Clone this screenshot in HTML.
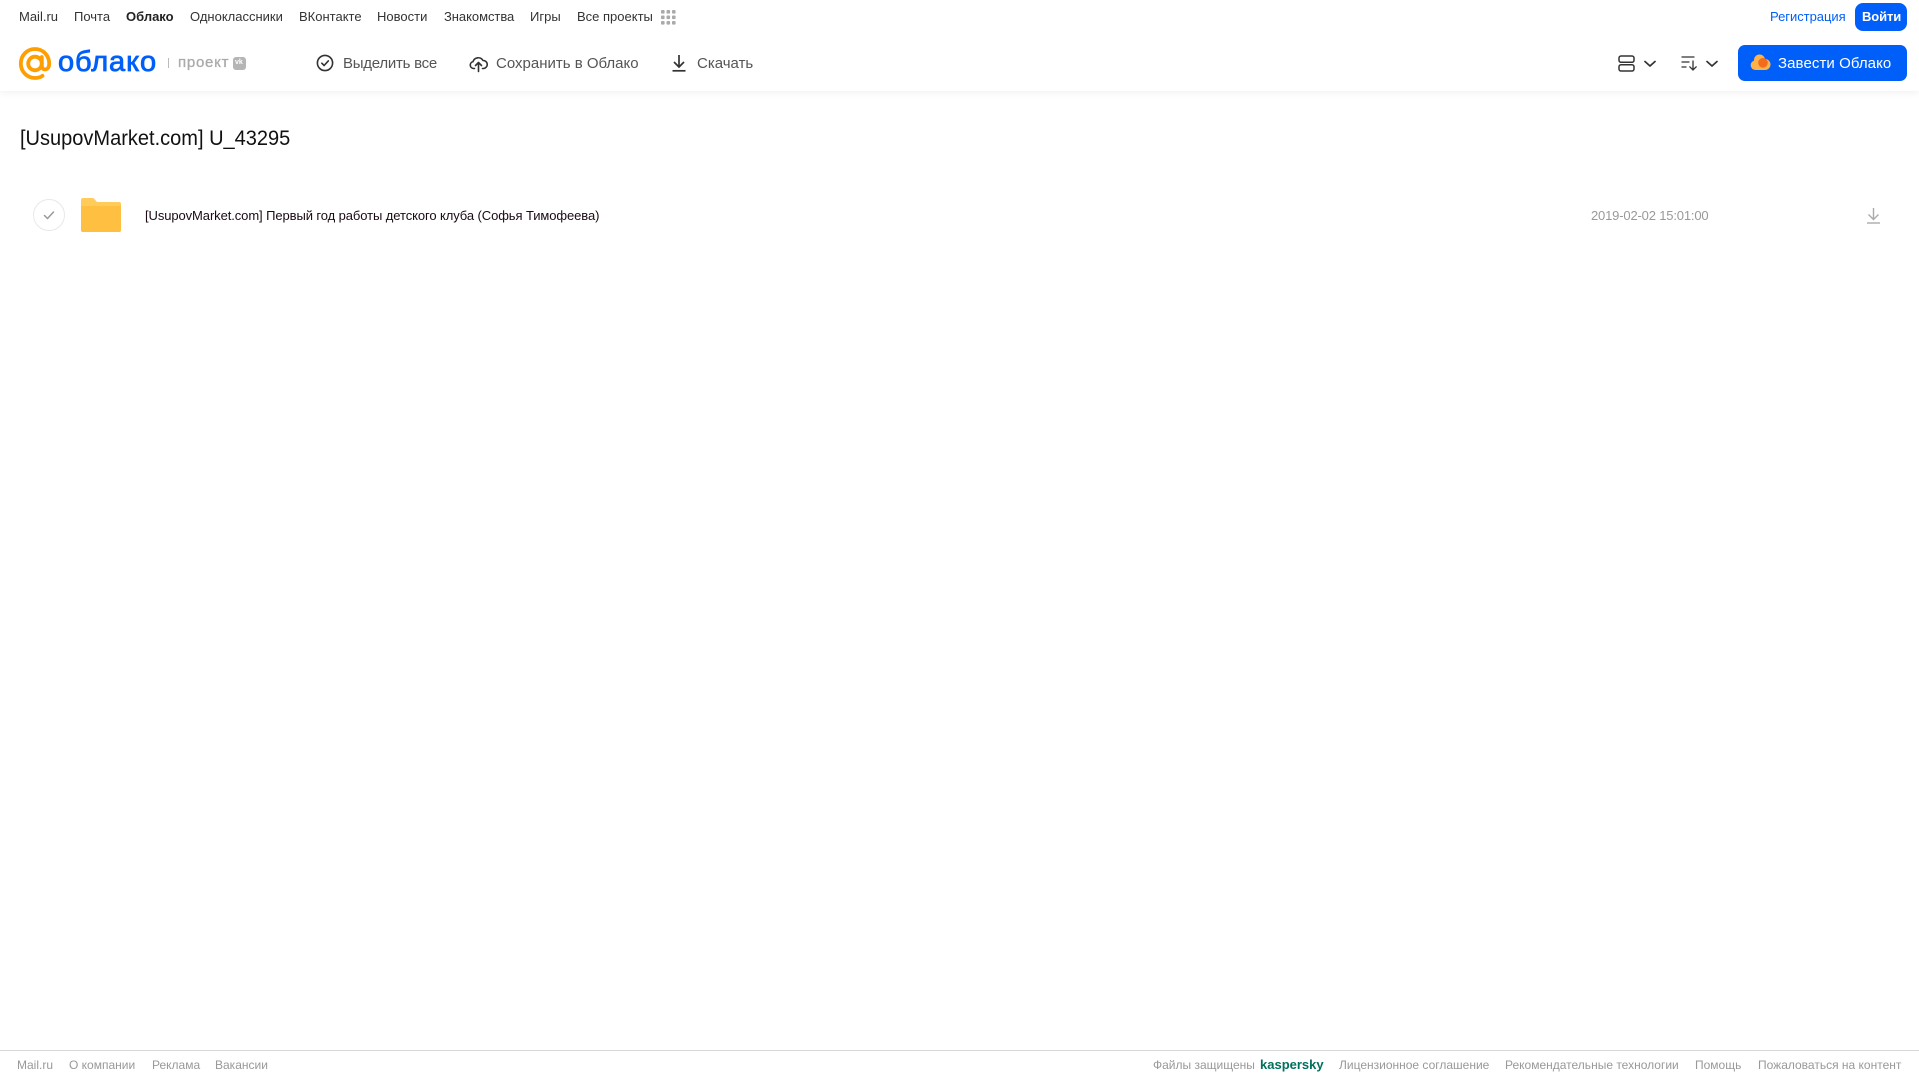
<!DOCTYPE html>
<html lang="ru"><head><meta charset="utf-8"><title>Облако</title>
<style>
html,body{margin:0;padding:0;background:#fff}
body{width:1919px;height:1079px;position:relative;overflow:hidden;font-family:"Liberation Sans",sans-serif}
.t{position:absolute;white-space:nowrap;line-height:20px}
.n{top:7px;font-size:13px;color:#333}
.a{top:54px;font-size:15px;color:#555}
.f{top:1055px;font-size:12px;color:#999}
svg{position:absolute;overflow:visible}
#hd{position:absolute;left:0;top:0;width:1919px;height:91px;background:#fff;box-shadow:0 1px 8px rgba(0,0,0,.07)}
</style></head><body>
<div id="hd"></div>
<span class="t n" style="left:19px">Mail.ru</span>
<span class="t n" style="left:74px">Почта</span>
<span class="t n" style="left:126px;font-weight:700;color:#222">Облако</span>
<span class="t n" style="left:190px">Одноклассники</span>
<span class="t n" style="left:299px">ВКонтакте</span>
<span class="t n" style="left:377px">Новости</span>
<span class="t n" style="left:444px;letter-spacing:-.05px">Знакомства</span>
<span class="t n" style="left:530px">Игры</span>
<span class="t n" style="left:577px">Все проекты</span>
<svg style="left:661px;top:10px" width="15" height="15" fill="#aaa"><rect x="0" y="0" width="3.6" height="3.6" rx="1"/><rect x="5.5" y="0" width="3.6" height="3.6" rx="1"/><rect x="11" y="0" width="3.6" height="3.6" rx="1"/><rect x="0" y="5.5" width="3.6" height="3.6" rx="1"/><rect x="5.5" y="5.5" width="3.6" height="3.6" rx="1"/><rect x="11" y="5.5" width="3.6" height="3.6" rx="1"/><rect x="0" y="11" width="3.6" height="3.6" rx="1"/><rect x="5.5" y="11" width="3.6" height="3.6" rx="1"/><rect x="11" y="11" width="3.6" height="3.6" rx="1"/></svg>
<span class="t n" style="left:1770px;color:#005ff9;letter-spacing:-.03px">Регистрация</span>
<div style="position:absolute;left:1855px;top:3px;width:52px;height:28px;border-radius:8px;background:#005ff9"></div>
<span class="t n" style="left:1862px;color:#fff;font-weight:700;letter-spacing:-.1px">Войти</span>

<svg style="left:19px;top:47px" width="33" height="33" viewBox="0 0 33 33" fill="none" stroke="#ff9e00" stroke-width="3.8"><circle cx="16" cy="16.5" r="6.8"/><path d="M22.800 10v8.500c0 5.600 7.400 5.600 7.400-2C30.200 8.500 24 2 16 2 8 2 1.800 8.500 1.800 16.500S8 31 16 31c3 0 5.500-.8 7.500-2.200" stroke-linecap="round"/></svg>
<span class="t" style="left:58px;top:45px;font-size:29px;line-height:34px;color:#005ff9;letter-spacing:.9px;-webkit-text-stroke:.8px #005ff9">облако</span>
<div style="position:absolute;left:168px;top:58px;width:1px;height:10px;background:#bbb"></div>
<span class="t" style="left:178px;top:53px;font-size:15px;color:#aaa;letter-spacing:.75px;-webkit-text-stroke:.3px #aaa">проект</span>
<div style="position:absolute;left:233px;top:57px;width:13px;height:13px;border-radius:3px;background:#b5b5b5"></div>
<span class="t" style="left:235px;top:53px;font-size:7px;color:#fff;font-weight:700">vk</span>

<svg style="left:316px;top:54px" width="18" height="18" fill="none" stroke="#333" stroke-width="1.6"><circle cx="9" cy="9" r="7.6"/><path d="M5.800 9.200l2.300 2.300 4.200-4.600" stroke-linecap="round" stroke-linejoin="round"/></svg>
<span class="t a" style="left:343px;letter-spacing:-.25px">Выделить все</span>
<svg style="left:469px;top:54px" width="19" height="18" fill="none" stroke="#333" stroke-width="1.6" stroke-linecap="round" stroke-linejoin="round"><path d="M5.500 14.500H4.500a3.500 3.500 0 0 1-.5-6.900A5.500 5.500 0 0 1 14 6.500a4 4 0 0 1 .5 8h-1"/><path d="M9.500 17.500V9M6.500 11.500l3-3 3 3"/></svg>
<span class="t a" style="left:496px">Сохранить в Облако</span>
<svg style="left:671px;top:54px" width="16" height="18" fill="none" stroke="#333" stroke-width="1.7"><path d="M8 1v11.500M3 8l5 5 5-5"/><path d="M1.500 16.800h13"/></svg>
<span class="t a" style="left:697px">Скачать</span>

<svg style="left:1618px;top:55px" width="17" height="17" fill="none" stroke="#333" stroke-width="1.500"><rect x="1" y="1" width="15" height="6.300" rx="2"/><rect x="1" y="9.700" width="15" height="6.300" rx="2"/></svg>
<svg style="left:1644px;top:60px" width="13" height="8" fill="none" stroke="#333" stroke-width="1.700" stroke-linecap="round" stroke-linejoin="round"><path d="M1 1.500l5 4.500 5-4.500"/></svg>
<svg style="left:1681px;top:55px" width="17" height="16" fill="none" stroke="#333" stroke-width="1.300" stroke-linecap="round"><path d="M1 2h12M1 7h7M1 12h4"/><path d="M12 6v9M8.800 11.800l3.200 3.200 3.200-3.200"/></svg>
<svg style="left:1706px;top:60px" width="13" height="8" fill="none" stroke="#333" stroke-width="1.700" stroke-linecap="round" stroke-linejoin="round"><path d="M1 1.500l5 4.500 5-4.500"/></svg>
<div style="position:absolute;left:1738px;top:45px;width:169px;height:36px;border-radius:7px;background:#005ff9"></div>
<svg style="left:1750px;top:54px" width="21" height="17"><g fill="#ffb24a"><circle cx="5.500" cy="11.200" r="4.800"/><circle cx="9.500" cy="6" r="5.500"/><circle cx="15" cy="10.500" r="5.500"/><rect x="5" y="10" width="10" height="6"/></g><circle cx="13" cy="8.800" r="4.800" fill="#f36b1c"/></svg>
<span class="t" style="left:1778px;top:54px;font-size:15px;color:#fff;letter-spacing:.08px">Завести Облако</span>

<span class="t" style="left:20px;top:127px;font-size:21px;line-height:24px;color:#111;transform:scaleX(.953);transform-origin:0 50%">[UsupovMarket.com] U_43295</span>

<svg style="left:32px;top:198px" width="34" height="34" fill="none"><circle cx="17" cy="17" r="15.500" stroke="#e8e8e8"/><path d="M12.500 17.500l3 3 6-6.500" stroke="#999" stroke-width="1.500" stroke-linecap="round" stroke-linejoin="round"/></svg>
<svg style="left:81px;top:198px" width="40" height="34"><path d="M2 0h9c1.500 0 2.500.7 3.200 1.900.7 1.300 1.500 2.100 3 2.100H38a2 2 0 0 1 2 2v26a2 2 0 0 1-2 2H2a2 2 0 0 1-2-2V2a2 2 0 0 1 2-2z" fill="#ffcc5c"/><path d="M0 8h40v24a2 2 0 0 1-2 2H2a2 2 0 0 1-2-2z" fill="#ffc042"/></svg>
<span class="t" style="left:145px;top:206px;font-size:13px;color:#1a0a14;letter-spacing:-.09px">[UsupovMarket.com] Первый год работы детского клуба (Софья Тимофеева)</span>
<span class="t" style="left:1591px;top:206px;font-size:13px;color:#999;letter-spacing:-.17px">2019-02-02 15:01:00</span>
<svg style="left:1866px;top:207px" width="15" height="17" fill="none" stroke="#aaa" stroke-width="1.400"><path d="M7.500 1v11M2.500 7.500l5 5 5-5"/><path d="M1 16h13"/></svg>

<div style="position:absolute;left:0;top:1050px;width:1919px;height:1px;background:#d8d8d8"></div>
<span class="t f" style="left:17px">Mail.ru</span>
<span class="t f" style="left:69px">О компании</span>
<span class="t f" style="left:152px">Реклама</span>
<span class="t f" style="left:215px">Вакансии</span>
<span class="t f" style="left:1153px">Файлы защищены</span>
<span class="t f" style="left:1260px;color:#00715c;font-weight:700;font-size:13px">kaspersky</span>
<span class="t f" style="left:1339px">Лицензионное соглашение</span>
<span class="t f" style="left:1505px">Рекомендательные технологии</span>
<span class="t f" style="left:1695px">Помощь</span>
<span class="t f" style="left:1758px">Пожаловаться на контент</span>
</body></html>
